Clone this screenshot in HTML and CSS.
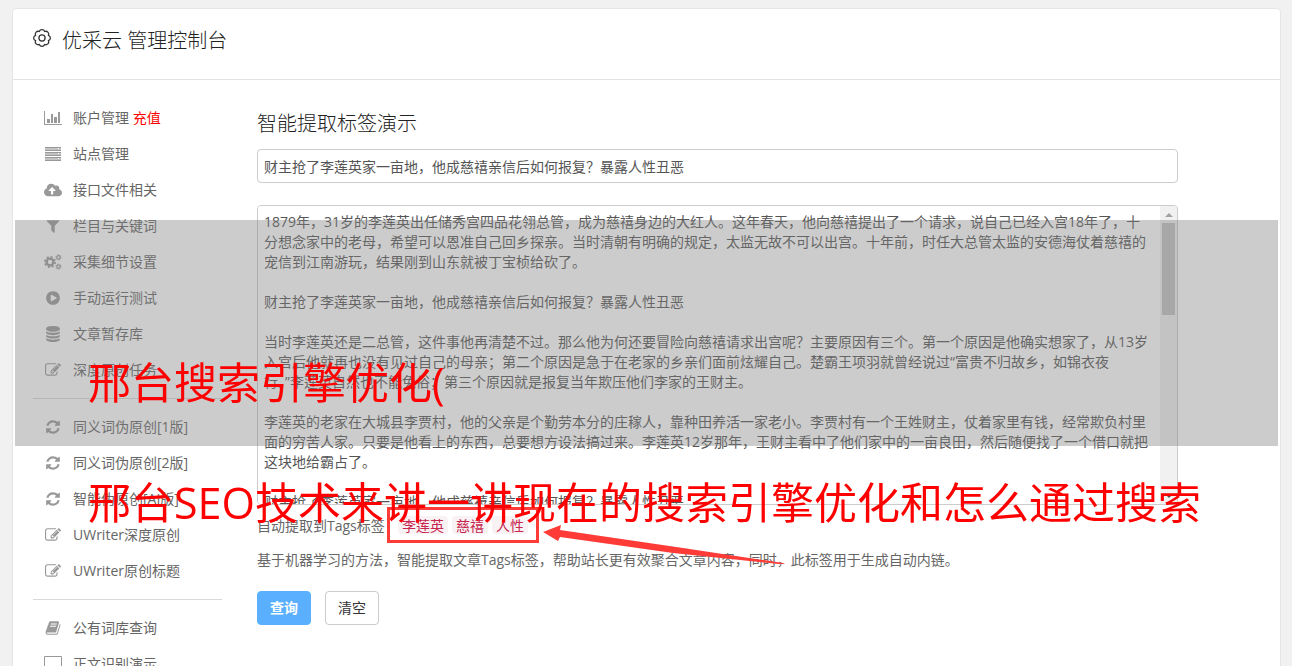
FILE: index.html
```html
<!DOCTYPE html>
<html lang="zh-CN">
<head>
    <meta charset="UTF-8">
    <meta name="viewport" content="width=device-width, initial-scale=1.0">
    <title>优采云 管理控制台</title>
    <link rel="stylesheet" href="styles.css">
</head>
<body>
    <svg class="sprite" aria-hidden="true">
        <symbol id="i-chart" viewBox="0 0 18 16">
            <path d="M0 1h1v13h17v1H0zM3 9h3v4H3zM7 4h2v9H7zM10 7h3v6h-3zM14 2h2v11h-2z"/>
        </symbol>
        <symbol id="i-server" viewBox="0 0 18 16">
            <path opacity=".6" d="M1 1h16v4H1zM1 6h16v4H1zM1 11h16v4H1z"/>
            <path d="M1 1h16v1H1zM1 4h16v1H1zM1 6h16v1H1zM1 9h16v1H1zM1 11h16v1H1zM1 14h16v1H1z"/>
            <path fill="#fff" d="M14 2h1v1h-1zM14 7h1v1h-1zM14 12h1v1h-1z"/>
        </symbol>
        <symbol id="i-cloud" viewBox="0 0 640 512">
            <path d="M537.6 226.6c4.1-10.7 6.4-22.4 6.4-34.6 0-53-43-96-96-96-19.7 0-38.1 6-53.3 16.2C367 64.2 315.3 32 256 32c-88.4 0-160 71.6-160 160 0 2.7.1 5.4.2 8.1C40.2 219.8 0 273.2 0 336c0 79.5 64.5 144 144 144h368c70.7 0 128-57.3 128-128 0-61.9-44-113.6-102.4-125.4zM393.4 288H328v112c0 8.8-7.2 16-16 16h-48c-8.8 0-16-7.2-16-16V288h-65.4c-14.3 0-21.4-17.2-11.3-27.3l105.4-105.4c6.2-6.2 16.4-6.2 22.6 0l105.4 105.4c10.1 10.1 2.9 27.3-11.3 27.3z"/>
        </symbol>
        <symbol id="i-filter" viewBox="0 0 1792 1792">
            <path d="M1595 295q17 41-14 70l-493 493v742q0 42-39 59-13 5-25 5-27 0-45-19l-256-256q-19-19-19-45v-486l-493-493q-31-29-14-70 17-39 59-39h1280q42 0 59 39z"/>
        </symbol>
        <symbol id="i-cogs" viewBox="0 0 18 16">
            <g fill="none" stroke="currentColor">
                <circle cx="6" cy="8" r="3.4" stroke-width="2.4"/>
                <circle cx="6" cy="8" r="5.1" stroke-width="1.8" stroke-dasharray="2 2"/>
                <circle cx="14.5" cy="3.4" r="1.7" stroke-width="1.2"/>
                <circle cx="14.5" cy="3.4" r="2.6" stroke-width="1" stroke-dasharray="1.2 1.52"/>
                <circle cx="14.5" cy="12.6" r="1.7" stroke-width="1.2"/>
                <circle cx="14.5" cy="12.6" r="2.6" stroke-width="1" stroke-dasharray="1.2 1.52"/>
            </g>
        </symbol>
        <symbol id="i-play" viewBox="0 0 1792 1792">
            <path d="M896 128q209 0 385.5 103t279.5 279.5 103 385.5-103 385.5-279.5 279.5-385.5 103-385.5-103-279.5-279.5-103-385.5 103-385.5 279.5-279.5 385.5-103zm384 823q32-18 32-55t-32-55l-544-320q-31-19-64-1-32 19-32 56v640q0 37 32 56 16 8 32 8 17 0 32-9z"/>
        </symbol>
        <symbol id="i-database" viewBox="0 0 1792 1792">
            <path d="M896 768q237 0 443-43t325-127v170q0 69-103 128t-280 93.5-385 34.5-385-34.5-280-93.5-103-128v-170q119 84 325 127t443 43zm0 768q237 0 443-43t325-127v170q0 69-103 128t-280 93.5-385 34.5-385-34.5-280-93.5-103-128v-170q119 84 325 127t443 43zm0-384q237 0 443-43t325-127v170q0 69-103 128t-280 93.5-385 34.5-385-34.5-280-93.5-103-128v-170q119 84 325 127t443 43zm0-1152q208 0 385 34.5t280 93.5 103 128v128q0 69-103 128t-280 93.5-385 34.5-385-34.5-280-93.5-103-128v-128q0-69 103-128t280-93.5 385-34.5z"/>
        </symbol>
        <symbol id="i-edit" viewBox="0 0 1792 1792">
            <path d="M888 1184l116-116-152-152-116 116v56h96v96h56zm440-720q-16-16-33 1l-350 350q-17 17-1 33t33-1l350-350q17-17 1-33zm80 594v190q0 119-84.5 203.5t-203.5 84.5h-832q-119 0-203.5-84.5t-84.5-203.5v-832q0-119 84.5-203.5t203.5-84.5h832q63 0 117 25 15 7 18 23 3 17-9 29l-49 49q-14 14-32 8-23-6-45-6h-832q-66 0-113 47t-47 113v832q0 66 47 113t113 47h832q66 0 113-47t47-113v-126q0-13 9-22l64-64q15-15 35-7t20 29zm-96-738l288 288-672 672h-288v-288zm444 132l-92 92-288-288 92-92q28-28 68-28t68 28l152 152q28 28 28 68t-28 68z"/>
        </symbol>
        <symbol id="i-refresh" viewBox="0 0 1792 1792">
            <path d="M1639 1056q0 5-1 7-64 268-268 434.5t-478 166.5q-146 0-282.5-55t-243.5-157l-129 129q-19 19-45 19t-45-19-19-45v-448q0-26 19-45t45-19h448q26 0 45 19t19 45-19 45l-137 137q71 66 161 102t187 36q134 0 250-65t186-179q11-17 53-117 8-23 30-23h192q13 0 22.5 9.5t9.5 22.5zm25-800v448q0 26-19 45t-45 19h-448q-26 0-45-19t-19-45 19-45l138-138q-148-137-349-137-134 0-250 65t-186 179q-11 17-53 117-8 23-30 23h-199q-13 0-22.5-9.5t-9.5-22.5v-7q65-268 270-434.5t480-166.5q146 0 284 55.5t245 156.5l130-129q19-19 45-19t45 19 19 45z"/>
        </symbol>
        <symbol id="i-book" viewBox="0 0 1792 1792">
            <path d="M1703 478q40 57 18 129l-275 906q-19 64-76.5 107.5t-122.5 43.5h-923q-77 0-148.5-53.5t-99.5-131.5q-24-67-2-127 0-4 3-27t4-37q1-8-3-21.5t-3-19.5q2-11 8-21t16.5-23.5 16.5-23.5q23-38 45-91.5t30-91.5q3-10 .5-30t-.5-28q3-11 17-28t17-23q21-36 42-92t25-90q1-9-2.5-32t.5-28q4-13 22-30.5t22-22.5q19-26 42.5-84.5t27.5-96.5q1-8-3-25.5t-2-26.5q2-8 9-18t18-23 17-21q8-12 16.5-30.5t15-35 16-36 19.5-32 26.5-23.5 36-11.5 47.5 5.5l-1 3q38-9 51-9h761q74 0 114 56t18 130l-274 906q-36 119-71.5 153.5t-128.5 34.5h-869q-27 0-38 15-11 16-1 43 24 70 144 70h923q29 0 56-15.5t35-41.5l300-987q7-22 5-57 38 15 59 43zm-1064 2q-4 13 2 22.5t20 9.5h608q13 0 25.5-9.5t16.5-22.5l21-64q4-13-2-22.5t-20-9.5h-608q-13 0-25.5 9.5t-16.5 22.5zm-83 256q-4 13 2 22.5t20 9.5h608q13 0 25.5-9.5t16.5-22.5l21-64q4-13-2-22.5t-20-9.5h-608q-13 0-25.5 9.5t-16.5 22.5z"/>
        </symbol>
        <symbol id="i-laptop" viewBox="0 0 18 16">
            <path fill-rule="evenodd" d="M1 0h16q1 0 1 1v11q0 1-1 1H1q-1 0-1-1V1q0-1 1-1zM1 1v11h16V1zM5 14h8v1H5z"/>
        </symbol>
    </svg>

    <div class="card">
        <header class="card-header">
            <svg class="logo" viewBox="-1 -1 20 20" aria-hidden="true">
                <path d="M16.2 6A3.2 3.2 0 0 1 16.2 12A3.2 3.2 0 0 1 12 16.2A3.2 3.2 0 0 1 6 16.2A3.2 3.2 0 0 1 1.8 12A3.2 3.2 0 0 1 1.8 6A3.2 3.2 0 0 1 6 1.8A3.2 3.2 0 0 1 12 1.8A3.2 3.2 0 0 1 16.2 6z"/>
                <circle cx="9" cy="9" r="3.4"/>
            </svg>
            <h1 class="title">优采云 管理控制台</h1>
        </header>
        <div class="card-body">
            <nav class="sidebar">
                <ul class="menu">
                    <li><a href="#"><svg><use href="#i-chart"/></svg>账户管理 <span class="recharge">充值</span></a></li>
                    <li><a href="#"><svg><use href="#i-server"/></svg>站点管理</a></li>
                    <li><a href="#"><svg><use href="#i-cloud"/></svg>接口文件相关</a></li>
                    <li><a href="#"><svg><use href="#i-filter"/></svg>栏目与关键词</a></li>
                    <li><a href="#"><svg><use href="#i-cogs"/></svg>采集细节设置</a></li>
                    <li><a href="#"><svg><use href="#i-play"/></svg>手动运行测试</a></li>
                    <li><a href="#"><svg><use href="#i-database"/></svg>文章暂存库</a></li>
                    <li><a href="#"><svg><use href="#i-edit"/></svg>深度原创任务</a></li>
                </ul>
                <ul class="menu">
                    <li><a href="#"><svg><use href="#i-refresh"/></svg>同义词伪原创[1版]</a></li>
                    <li><a href="#"><svg><use href="#i-refresh"/></svg>同义词伪原创[2版]</a></li>
                    <li><a href="#"><svg><use href="#i-refresh"/></svg>智能伪原创[AI版]</a></li>
                    <li><a href="#"><svg><use href="#i-edit"/></svg>UWriter深度原创</a></li>
                    <li><a href="#"><svg><use href="#i-edit"/></svg>UWriter原创标题</a></li>
                </ul>
                <ul class="menu">
                    <li><a href="#"><svg><use href="#i-book"/></svg>公有词库查询</a></li>
                    <li><a href="#"><svg><use href="#i-laptop"/></svg>正文识别演示</a></li>
                </ul>
            </nav>
            <main class="content">
                <h2 class="subtitle">智能提取标签演示</h2>
                <form class="form">
                    <input class="field" type="text" aria-label="标题" value="财主抢了李莲英家一亩地，他成慈禧亲信后如何报复？暴露人性丑恶">
                    <div class="article">
                        <textarea aria-label="正文">1879年，31岁的李莲英出任储秀宫四品花翎总管，成为慈禧身边的大红人。这年春天，他向慈禧提出了一个请求，说自己已经入宫18年了，十分想念家中的老母，希望可以恩准自己回乡探亲。当时清朝有明确的规定，太监无故不可以出宫。十年前，时任大总管太监的安德海仗着慈禧的宠信到江南游玩，结果刚到山东就被丁宝桢给砍了。

财主抢了李莲英家一亩地，他成慈禧亲信后如何报复？暴露人性丑恶

当时李莲英还是二总管，这件事他再清楚不过。那么他为何还要冒险向慈禧请求出宫呢？主要原因有三个。第一个原因是他确实想家了，从13岁入宫后他就再也没有见过自己的母亲；第二个原因是急于在老家的乡亲们面前炫耀自己。楚霸王项羽就曾经说过“富贵不归故乡，如锦衣夜
行。”李莲英自然也不能免俗；第三个原因就是报复当年欺压他们李家的王财主。

李莲英的老家在大城县李贾村，他的父亲是个勤劳本分的庄稼人，靠种田养活一家老小。李贾村有一个王姓财主，仗着家里有钱，经常欺负村里面的穷苦人家。只要是他看上的东西，总要想方设法搞过来。李莲英12岁那年，王财主看中了他们家中的一亩良田，然后随便找了一个借口就把这块地给霸占了。

财主抢了李莲英家一亩地，他成慈禧亲信后如何报复？暴露人性丑恶
</textarea>
                        <div class="scrollbar">
                            <svg viewBox="0 0 17 17"><path fill="#a3a3a3" d="M5 11l4-4 4 4z"/></svg>
                            <div class="thumb"></div>
                            <svg viewBox="0 0 17 17"><path fill="#505050" d="M5 7l4 4 4-4z"/></svg>
                        </div>
                    </div>
                    <div class="tags">
                        <span class="tags-label">自动提取到Tags标签<span class="colon">：</span></span>
                        <div class="tag-list">
                            <code>李莲英</code>
                            <code>慈禧</code>
                            <code>人性</code>
                            <svg class="arrow" viewBox="0 0 244 42" aria-hidden="true">
                                <path d="M0 9L18 2 17 7 140 25 240 40 242 41 236 41 130 30 17 14 15 18z"/>
                            </svg>
                        </div>
                    </div>
                    <p class="hint">基于机器学习的方法，智能提取文章Tags标签，帮助站长更有效聚合文章内容，同时，此标签用于生成自动内链。</p>
                    <div class="buttons">
                        <button class="btn btn-primary" type="submit">查询</button>
                        <button class="btn" type="reset">清空</button>
                    </div>
                </form>
            </main>
        </div>
    </div>

    <div class="band"></div>
    <div class="caption">
        <p>邢台搜索引擎优化(</p>
        <p>邢台SEO技术来讲一讲现在的搜索引擎优化和怎么通过搜索</p>
    </div>
</body>
</html>
```
FILE: styles.css
```css
* {
    box-sizing: border-box;
}
body {
    position: relative;
    height: 100vh;
    margin: 0;
    padding: 8px 11px 0 12px;
    overflow: hidden;
    background-color: #f1f1f1;
    color: #666;
    font: 14px/20px "Open Sans", "Noto Sans CJK SC", sans-serif;
}
h1, h2, p, ul {
    margin: 0;
    padding: 0;
    font-weight: 400;
}
.sprite {
    position: absolute;
    width: 0;
    height: 0;
}
.card {
    min-height: 100vh;
    background-color: #fff;
    border: 1px solid #e5e5e5;
    border-radius: 4px;
}
.card-header {
    display: flex;
    gap: 11px;
    height: 71px;
    padding: 20px;
    border-bottom: 1px solid #e2e2e2;
}
.logo {
    width: 18px;
    height: 18px;
    fill: none;
    stroke: #333;
    stroke-width: 1.4;
}
.title, .subtitle {
    color: #222;
    font-size: 20px;
    font-weight: 300;
    line-height: 24px;
}
.card-body {
    display: flex;
    gap: 35px;
    padding: 20px 0 0 20px;
}

/* sidebar */
.sidebar {
    flex: 0 0 189px;
}
.menu {
    list-style: none;
}
.menu + .menu {
    margin-top: 10px;
    padding-top: 10px;
    border-top: 1px solid #d9d9d9;
}
.menu a {
    display: flex;
    align-items: center;
    height: 36px;
    padding-left: 11px;
    color: #666;
    text-decoration: none;
    white-space: pre;
}
.menu svg {
    width: 18px;
    height: 16px;
    margin-right: 11px;
    color: #999;
    fill: currentColor;
}
.recharge {
    color: #f00;
}

/* form */
.content {
    flex: 1;
    padding-top: 12px;
}
.subtitle {
    margin-bottom: 13px;
}
.form {
    width: 90%;
}
.field {
    display: block;
    width: 100%;
    height: 34px;
    padding: 6px;
    background-color: #fff;
    border: 1px solid #ccc;
    border-radius: 4px;
    outline: none;
    color: #555;
    font: inherit;
}
.article {
    display: flex;
    height: 300px;
    margin-top: 22px;
    border: 1px solid #ccc;
    border-radius: 4px;
    overflow: hidden;
}
.article textarea {
    flex: 1;
    padding: 6px;
    border: none;
    outline: none;
    resize: none;
    scrollbar-width: none;
    color: #555;
    font: inherit;
}
.scrollbar {
    display: flex;
    flex-direction: column;
    width: 17px;
    background-color: #f1f1f1;
}
.scrollbar svg {
    width: 17px;
    height: 17px;
}
.thumb {
    height: 92px;
    margin: 0 2px auto;
    background-color: #c1c1c1;
}
.tags {
    display: flex;
    align-items: center;
    height: 36px;
    margin-top: 2px;
}
.tags-label {
    flex: 0 0 130px;
    min-width: 0;
    white-space: nowrap;
}
/* the TC face sets its colon in the middle of the em box */
.colon {
    font-family: "Noto Sans CJK TC", sans-serif;
}
.tag-list {
    position: relative;
    display: flex;
    align-items: center;
    gap: 4px;
    height: 36px;
    padding: 0 8px;
    border: 3px solid #ff3b38;
}
.tag-list code {
    padding: 0 4px;
    background-color: #f9f2f4;
    border-radius: 4px;
    color: #c7254e;
    font: 14px/18px "Noto Sans CJK SC", sans-serif;
}
.arrow {
    position: absolute;
    top: 13px;
    left: 153px;
    width: 244px;
    height: 42px;
    fill: #ff3b38;
}
.hint {
    margin-top: 7px;
}
.buttons {
    display: flex;
    gap: 14px;
    margin-top: 21px;
}
.btn {
    height: 34px;
    padding: 0 12px;
    background-color: #fff;
    border: 1px solid #ccc;
    border-radius: 4px;
    color: #333;
    font: inherit;
}
.btn-primary {
    background-color: #5aafff;
    border-color: #5aafff;
    color: #fff;
    font-weight: 700;
}

/* caption laid over the page */
.band {
    position: absolute;
    top: 220px;
    left: 15px;
    right: 14px;
    height: 226px;
    background-color: rgba(128, 128, 128, .4);
    pointer-events: none;
}
.caption {
    position: absolute;
    top: 323px;
    left: 88px;
    color: #f00;
    font-size: 43px;
    line-height: 120px;
    white-space: nowrap;
    pointer-events: none;
}
```
